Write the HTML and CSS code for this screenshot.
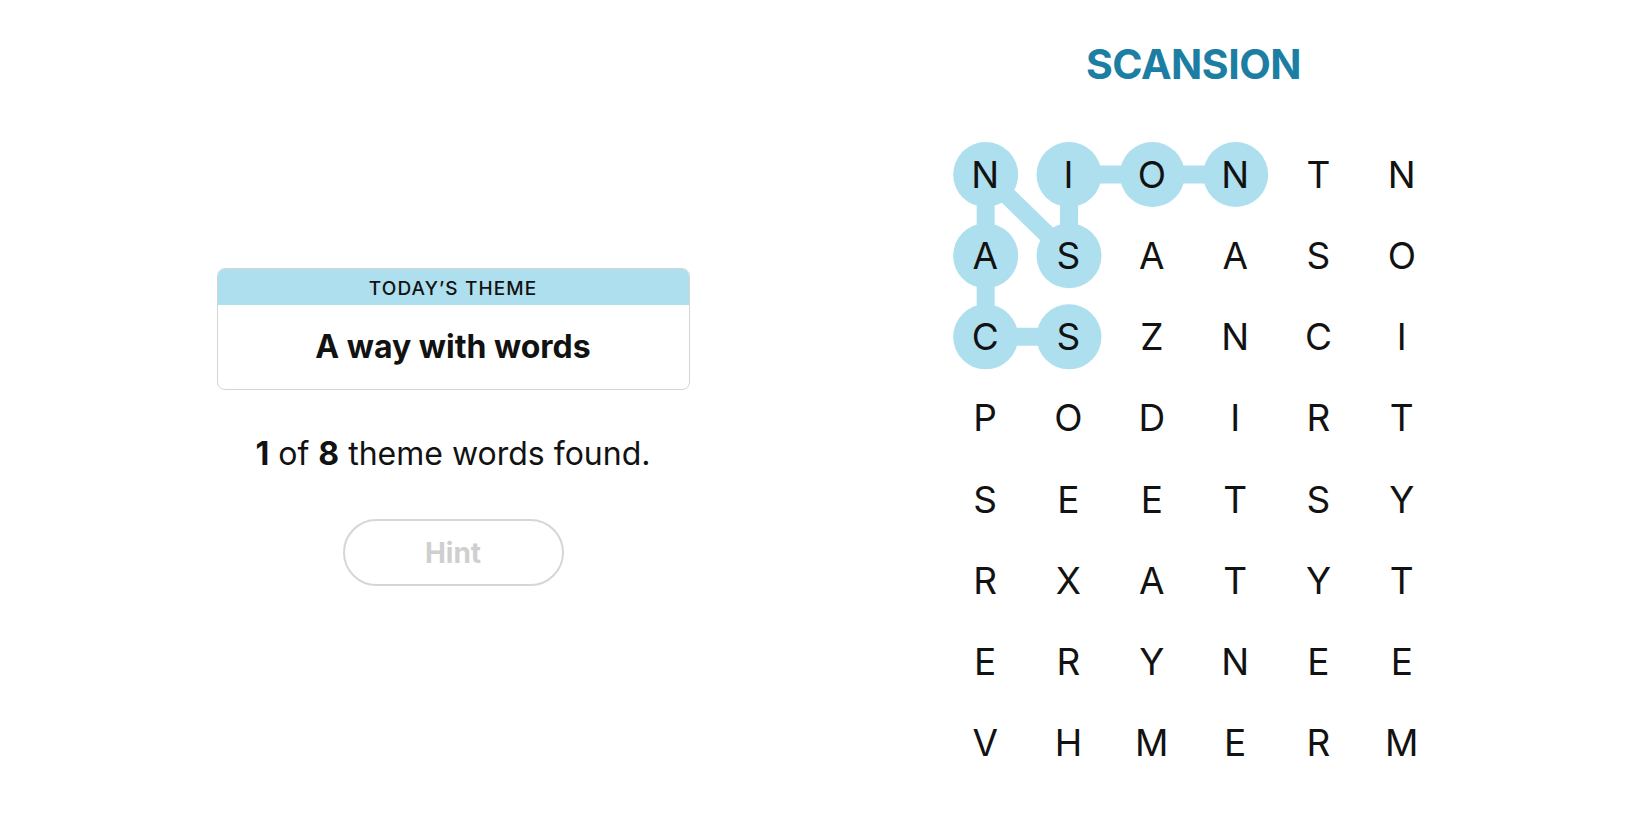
FILE: index.html
```html
<!DOCTYPE html>
<html lang="en">
<head>
<meta charset="utf-8">
<title>Strands</title>
<link rel="stylesheet" href="styles.css">
</head>
<body>
<div class="page">
  <section class="info">
    <div class="theme-card">
      <div class="theme-head">TODAY’S THEME</div>
      <div class="theme-body">A way with words</div>
    </div>
    <p class="progress"><b>1</b> of <b>8</b> theme words found.</p>
    <button class="hint" type="button" disabled>Hint</button>
  </section>
  <section class="board">
    <h1 class="title">SCANSION</h1>
    <div class="grid">
      <svg class="trail" width="500" height="649" viewBox="0 0 500 649" aria-hidden="true">
        <polyline points="125,202.86 41.67,202.86 41.67,121.71 41.67,40.57 125,121.71 125,40.57 208.33,40.57 291.67,40.57" fill="none" stroke="#aedfee" stroke-width="18" stroke-linejoin="round" stroke-linecap="round"/>
        <g fill="#aedfee">
          <circle cx="41.67" cy="40.57" r="32.5"/>
          <circle cx="125" cy="40.57" r="32.5"/>
          <circle cx="208.33" cy="40.57" r="32.5"/>
          <circle cx="291.67" cy="40.57" r="32.5"/>
          <circle cx="41.67" cy="121.71" r="32.5"/>
          <circle cx="125" cy="121.71" r="32.5"/>
          <circle cx="41.67" cy="202.86" r="32.5"/>
          <circle cx="125" cy="202.86" r="32.5"/>
        </g>
      </svg>
      <span class="cell">N</span><span class="cell">I</span><span class="cell">O</span><span class="cell">N</span><span class="cell">T</span><span class="cell">N</span>
      <span class="cell">A</span><span class="cell">S</span><span class="cell">A</span><span class="cell">A</span><span class="cell">S</span><span class="cell">O</span>
      <span class="cell">C</span><span class="cell">S</span><span class="cell">Z</span><span class="cell">N</span><span class="cell">C</span><span class="cell">I</span>
      <span class="cell">P</span><span class="cell">O</span><span class="cell">D</span><span class="cell">I</span><span class="cell">R</span><span class="cell">T</span>
      <span class="cell">S</span><span class="cell">E</span><span class="cell">E</span><span class="cell">T</span><span class="cell">S</span><span class="cell">Y</span>
      <span class="cell">R</span><span class="cell">X</span><span class="cell">A</span><span class="cell">T</span><span class="cell">Y</span><span class="cell">T</span>
      <span class="cell">E</span><span class="cell">R</span><span class="cell">Y</span><span class="cell">N</span><span class="cell">E</span><span class="cell">E</span>
      <span class="cell">V</span><span class="cell">H</span><span class="cell">M</span><span class="cell">E</span><span class="cell">R</span><span class="cell">M</span>
    </div>
  </section>
</div>
</body>
</html>
```
FILE: styles.css
```css
html, body {
  margin: 0;
  padding: 0;
  background: #ffffff;
}

body {
  font-family: Inter, "Liberation Sans", Arial, sans-serif;
  color: #121212;
}

.page {
  display: flex;
  width: 1650px;
  height: 825px;
  overflow: hidden;
}

.info {
  width: 906px;
  display: flex;
  flex-direction: column;
  align-items: center;
  padding-top: 268px;
  box-sizing: border-box;
}

.theme-card {
  width: 473px;
  height: 122px;
  box-sizing: border-box;
  border: 1px solid #d4d4d4;
  border-radius: 8px;
  overflow: hidden;
  display: flex;
  flex-direction: column;
}

.theme-head {
  height: 36px;
  padding-top: 2px;
  box-sizing: border-box;
  background: #aedfee;
  display: flex;
  align-items: center;
  justify-content: center;
  font-size: 19px;
  font-weight: 500;
  letter-spacing: 1.1px;
}

.theme-body {
  flex: 1;
  display: flex;
  align-items: center;
  justify-content: center;
  font-size: 32px;
  font-weight: 700;
  padding-bottom: 2px;
}

.progress {
  margin: 45px 0 0;
  font-size: 32px;
  line-height: 38px;
  font-weight: 400;
}

.progress b {
  font-weight: 700;
}

.hint {
  margin-top: 46px;
  width: 221px;
  height: 67px;
  box-sizing: border-box;
  border: 2px solid #d6d6d6;
  border-radius: 34px;
  background: #ffffff;
  color: #cfcfcf;
  font-family: Inter, "Liberation Sans", Arial, sans-serif;
  font-size: 28px;
  font-weight: 700;
  padding: 0;
}

.board {
  width: 575px;
  display: flex;
  flex-direction: column;
  align-items: center;
  padding-top: 44px;
  box-sizing: border-box;
}

.title {
  margin: 0;
  font-size: 41px;
  line-height: 40px;
  font-weight: 700;
  letter-spacing: -0.5px;
  color: #1d7ea3;
}

.grid {
  position: relative;
  margin-top: 50px;
  display: grid;
  grid-template-columns: repeat(6, 83.333px);
  grid-auto-rows: 81.14px;
  width: 500px;
}

.trail {
  position: absolute;
  left: 0;
  top: 0;
}

.cell {
  position: relative;
  display: flex;
  align-items: center;
  justify-content: center;
  font-size: 37px;
  font-weight: 400;
  line-height: 1;
}
```
